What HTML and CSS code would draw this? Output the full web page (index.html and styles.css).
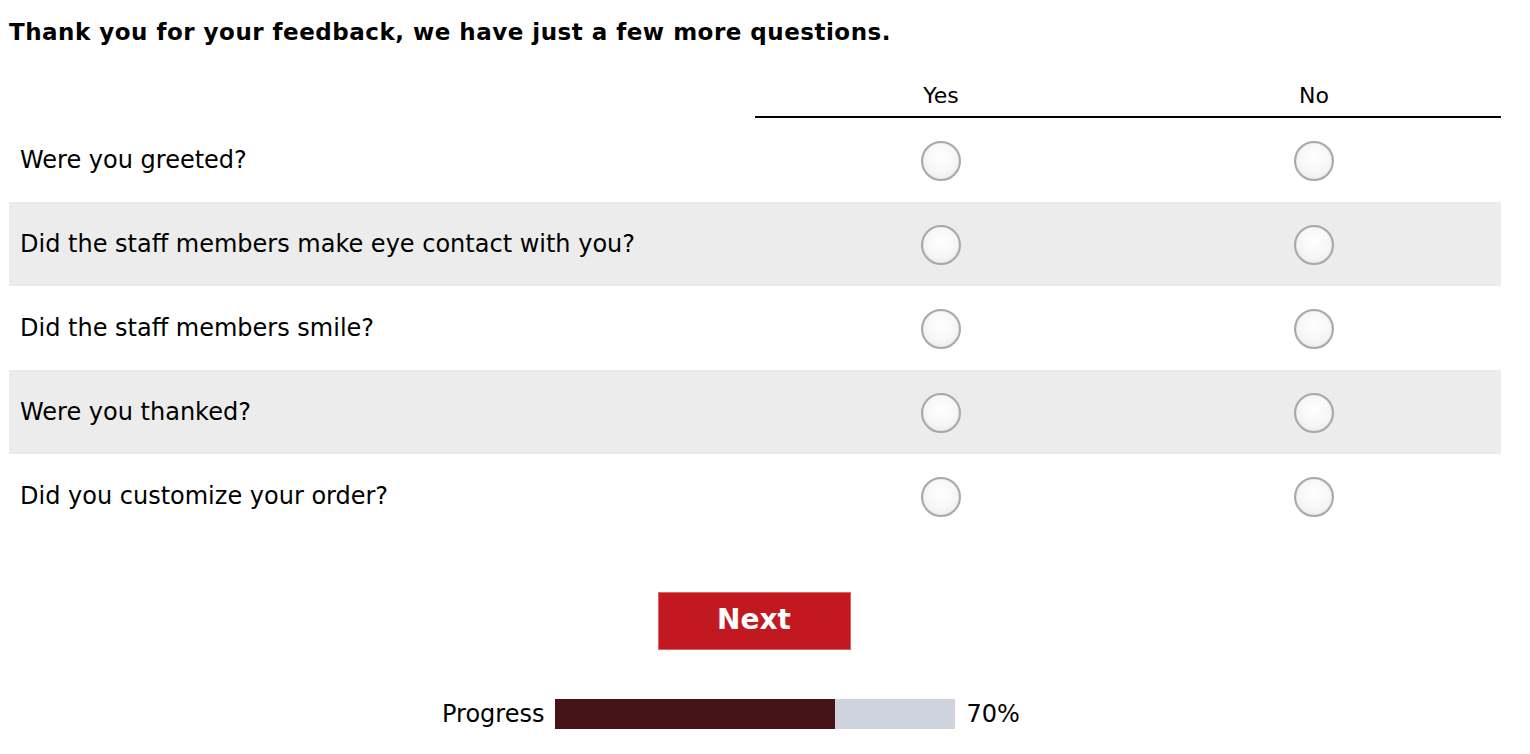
FILE: index.html
```html
<!DOCTYPE html>
<html lang="en">
<head>
  <meta charset="UTF-8">
  <title>Survey</title>
  <link rel="stylesheet" href="styles.css">
</head>
<body>
  <div class="survey">
    <h1 class="title">Thank you for your feedback, we have just a few more questions.</h1>

    <div class="grid">
      <div class="row head">
        <div class="q"></div>
        <div class="opt">Yes</div>
        <div class="opt">No</div>
      </div>
      <div class="row">
        <div class="q">Were you greeted?</div>
        <div class="opt"><input type="radio" name="q1"></div>
        <div class="opt"><input type="radio" name="q1"></div>
      </div>
      <div class="row alt">
        <div class="q">Did the staff members make eye contact with you?</div>
        <div class="opt"><input type="radio" name="q2"></div>
        <div class="opt"><input type="radio" name="q2"></div>
      </div>
      <div class="row">
        <div class="q">Did the staff members smile?</div>
        <div class="opt"><input type="radio" name="q3"></div>
        <div class="opt"><input type="radio" name="q3"></div>
      </div>
      <div class="row alt">
        <div class="q">Were you thanked?</div>
        <div class="opt"><input type="radio" name="q4"></div>
        <div class="opt"><input type="radio" name="q4"></div>
      </div>
      <div class="row">
        <div class="q">Did you customize your order?</div>
        <div class="opt"><input type="radio" name="q5"></div>
        <div class="opt"><input type="radio" name="q5"></div>
      </div>
    </div>

    <div class="actions">
      <button class="next">Next</button>
    </div>

    <div class="progress">
      <span class="label">Progress</span>
      <div class="bar"><div class="fill" style="width: 70%"></div></div>
      <span class="pct">70%</span>
    </div>
  </div>
</body>
</html>
```

FILE: styles.css
```css
body {
  margin: 0;
  font-family: "DejaVu Sans", Verdana, sans-serif;
  color: #000;
  background: #fff;
}
.survey {
  width: 1492px;
  margin-left: 9px;
}
.title {
  font-size: 23px;
  font-weight: bold;
  letter-spacing: 0.5px;
  margin: 0;
  padding-top: 20px;
  height: 50px;
  line-height: 24px;
  white-space: nowrap;
}
.row {
  display: grid;
  grid-template-columns: 746px 372px 374px;
  height: 84px;
  align-items: center;
}
.row.alt {
  background: #ececec;
}
.row.head {
  height: 48px;
  align-items: start;
}
.row.head .opt {
  border-bottom: 2px solid #000;
  height: 46px;
  line-height: 52px;
  font-size: 22px;
}
.row.head .q {
  height: 48px;
}
.q {
  padding-left: 11px;
  font-size: 24px;
}
.opt {
  text-align: center;
  font-size: 24px;
}
.opt input {
  appearance: none;
  -webkit-appearance: none;
  width: 40px;
  height: 40px;
  margin: 2px 0 0;
  border-radius: 50%;
  border: 2px solid #a9a9a9;
  background: radial-gradient(circle at 50% 40%, #ffffff 0%, #f6f6f6 55%, #e6e6e6 100%);
  box-shadow: inset 0 0 1px rgba(0, 0, 0, 0.25);
  vertical-align: middle;
}
.actions {
  display: flex;
  justify-content: center;
  padding-top: 54px;
  margin-left: -2px;
}
.next {
  width: 193px;
  height: 58px;
  padding: 0 0 3px;
  background: #c1191f;
  color: #fff;
  border: 1px solid #d66;
  font-family: "DejaVu Sans", Verdana, sans-serif;
  font-weight: bold;
  font-size: 28px;
  cursor: pointer;
}
.progress {
  display: flex;
  align-items: center;
  gap: 11px;
  margin-top: 49px;
  padding-left: 433px;
  font-size: 24px;
}
.bar {
  width: 400px;
  height: 30px;
  background: #cfd3de;
}
.fill {
  height: 100%;
  background: #461417;
}
```
